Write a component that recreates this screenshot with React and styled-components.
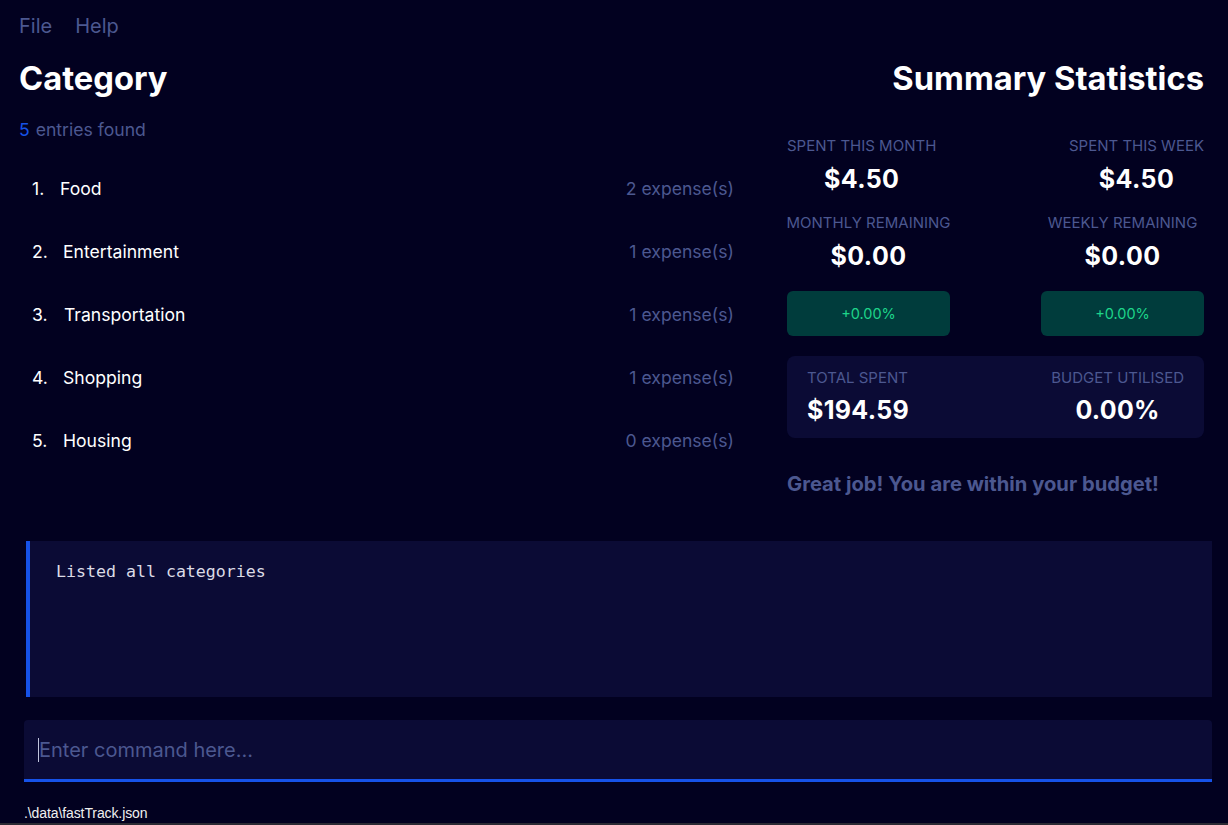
import React from 'react';
import styled, { createGlobalStyle } from 'styled-components';

const GlobalStyle = createGlobalStyle`
  html, body {
    margin: 0;
    padding: 0;
    background: #020120;
  }
  body {
    font-family: Inter, "Noto Sans", sans-serif;
    color: #ffffff;
  }
`;

const Page = styled.div`
  width: 1228px;
  height: 825px;
  background: #020120;
  display: flex;
  flex-direction: column;
  overflow: hidden;
`;

const MenuBar = styled.div`
  height: 52px;
  display: flex;
  align-items: center;
  gap: 23px;
  padding-left: 19px;
  font-size: 20px;
  color: #4c5890;
`;

const Main = styled.div`
  display: flex;
  padding: 0 24px 0 19px;
  gap: 53px;
`;

const LeftPane = styled.div`
  flex: 1;
`;

const RightPane = styled.div`
  width: 417px;
`;

const Title = styled.h1`
  margin: 6px 0 0;
  font-size: 32.7px;
  line-height: 40px;
  font-weight: 700;
  text-align: ${(p) => (p.$right ? 'right' : 'left')};
`;

const Found = styled.div`
  margin-top: 21px;
  font-size: 17.6px;
  line-height: 22px;
  color: #4c5890;

  span {
    color: #1652e8;
    margin-right: 6px;
  }
`;

const List = styled.div`
  padding-top: 16px;
`;

const Row = styled.div`
  height: 63px;
  display: flex;
  align-items: center;
  padding-left: 13px;
  font-size: 17.6px;
`;

const Index = styled.span`
  width: ${(p) => p.$w}px;
`;

const Name = styled.span`
  flex: 1;
`;

const Count = styled.span`
  color: #4c5890;
`;

const StatRow = styled.div`
  display: flex;
  justify-content: space-between;
  margin-top: ${(p) => p.$mt}px;
`;

const Stat = styled.div`
  display: flex;
  flex-direction: column;
  align-items: center;
  width: ${(p) => (p.$w ? `${p.$w}px` : 'auto')};
`;

const Label = styled.div`
  font-size: 15px;
  line-height: 18px;
  color: #4c5890;
  text-transform: uppercase;
  white-space: nowrap;
`;

const Value = styled.div`
  margin-top: 9px;
  font-size: 25px;
  line-height: 30px;
  font-weight: 700;
  letter-spacing: 0.4px;
  color: #ffffff;
`;

const Change = styled.div`
  width: 163px;
  height: 45px;
  border-radius: 6px;
  background: #003c3c;
  color: #1ed48a;
  font-size: 14.5px;
  display: flex;
  align-items: center;
  justify-content: center;
`;

const TotalCard = styled.div`
  margin-top: 20px;
  height: 82px;
  box-sizing: border-box;
  padding: 13px 20px 0 20px;
  background: #0b0b35;
  border-radius: 8px;
  display: flex;
  justify-content: space-between;
`;

const TotalBlock = styled.div`
  display: flex;
  flex-direction: column;
  align-items: ${(p) => (p.$center ? 'center' : 'flex-start')};
  gap: 9px;
`;

const TotalValue = styled.div`
  font-size: 25px;
  line-height: 28px;
  font-weight: 700;
  letter-spacing: 0.3px;
`;

const Message = styled.div`
  margin-top: 34px;
  font-size: 20.2px;
  line-height: 24px;
  font-weight: 700;
  color: #4c5890;
`;

const ResultBox = styled.div`
  margin: 45px 16px 0 26px;
  height: 156px;
  box-sizing: border-box;
  background: #0b0b35;
  border-left: 4px solid #1652e8;
  padding: 20px 26px;
  font-family: "DejaVu Sans Mono", "Liberation Mono", monospace;
  font-size: 16.6px;
  line-height: 22px;
  color: #dcdce6;
`;

const CommandBox = styled.div`
  margin: 23px 16px 0 24px;
  height: 62px;
  box-sizing: border-box;
  background: #0b0b35;
  border-bottom: 3px solid #1652e8;
  border-radius: 4px 4px 0 0;
  display: flex;
  align-items: center;
  padding-left: 14px;
`;

const Caret = styled.span`
  width: 1px;
  height: 24px;
  background: #c0c4dc;
`;

const Placeholder = styled.span`
  font-size: 20px;
  color: #4c5890;
`;

const StatusBar = styled.div`
  margin-top: auto;
  height: 42px;
  box-sizing: border-box;
  padding: 22px 0 0 24px;
  border-bottom: 2px solid #2a2a33;
  font-family: "Liberation Sans", Arial, sans-serif;
  font-size: 14px;
  letter-spacing: -0.1px;
  color: #f0f0f0;
`;

const categories = [
  { name: 'Food', count: 2, w: 28 },
  { name: 'Entertainment', count: 1, w: 31 },
  { name: 'Transportation', count: 1, w: 32 },
  { name: 'Shopping', count: 1, w: 31 },
  { name: 'Housing', count: 0, w: 31 },
];

export default function App() {
  return (
    <Page>
      <GlobalStyle />
      <MenuBar>
        <span>File</span>
        <span>Help</span>
      </MenuBar>
      <Main>
        <LeftPane>
          <Title>Category</Title>
          <Found>
            <span>5</span>entries found
          </Found>
          <List>
            {categories.map((c, i) => (
              <Row key={c.name}>
                <Index $w={c.w}>{i + 1}.</Index>
                <Name>{c.name}</Name>
                <Count>{c.count} expense(s)</Count>
              </Row>
            ))}
          </List>
        </LeftPane>
        <RightPane>
          <Title $right>Summary Statistics</Title>
          <StatRow $mt={39}>
            <Stat>
              <Label>Spent this month</Label>
              <Value>$4.50</Value>
            </Stat>
            <Stat>
              <Label>Spent this week</Label>
              <Value>$4.50</Value>
            </Stat>
          </StatRow>
          <StatRow $mt={20}>
            <Stat $w={163}>
              <Label>Monthly remaining</Label>
              <Value>$0.00</Value>
            </Stat>
            <Stat $w={163}>
              <Label>Weekly remaining</Label>
              <Value>$0.00</Value>
            </Stat>
          </StatRow>
          <StatRow $mt={20}>
            <Change>+0.00%</Change>
            <Change>+0.00%</Change>
          </StatRow>
          <TotalCard>
            <TotalBlock>
              <Label>Total spent</Label>
              <TotalValue>$194.59</TotalValue>
            </TotalBlock>
            <TotalBlock $center>
              <Label>Budget utilised</Label>
              <TotalValue>0.00%</TotalValue>
            </TotalBlock>
          </TotalCard>
          <Message>Great job! You are within your budget!</Message>
        </RightPane>
      </Main>
      <ResultBox>Listed all categories</ResultBox>
      <CommandBox>
        <Caret />
        <Placeholder>Enter command here...</Placeholder>
      </CommandBox>
      <StatusBar>.\data\fastTrack.json</StatusBar>
    </Page>
  );
}
